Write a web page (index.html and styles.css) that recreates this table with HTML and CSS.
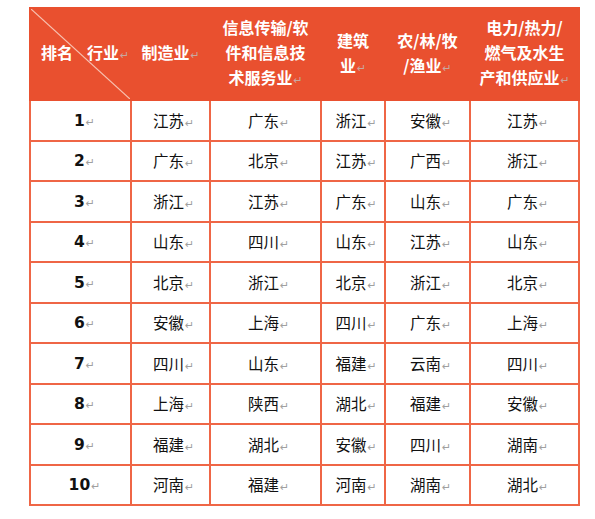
FILE: index.html
```html
<!DOCTYPE html>
<html lang="zh">
<head>
<meta charset="utf-8">
<title>行业排名</title>
<link rel="stylesheet" href="styles.css">
</head>
<body>
<table class="rank">
  <colgroup>
    <col class="c1"><col class="c2"><col class="c3"><col class="c4"><col class="c5"><col class="c6">
  </colgroup>
  <thead>
    <tr class="head">
      <th class="corner">
        <svg class="diag" viewBox="0 0 100 100" preserveAspectRatio="none"><line x1="0" y1="0" x2="100" y2="100" stroke="#f7c2b2" stroke-width="1.2" vector-effect="non-scaling-stroke"/></svg>
        <span class="corner-l">排名</span><span class="corner-r">行业<span class="pm">↵</span></span>
      </th>
      <th>制造业<span class="pm">↵</span></th>
      <th>信息传输/软<br>件和信息技<br>术服务业<span class="pm">↵</span></th>
      <th>建筑<br>业<span class="pm">↵</span></th>
      <th>农/林/牧<br>/渔业<span class="pm">↵</span></th>
      <th>电力/热力/<br>燃气及水生<br>产和供应业<span class="pm">↵</span></th>
    </tr>
  </thead>
  <tbody>
    <tr><td class="num">1<span class="pm">↵</span></td><td>江苏<span class="pm">↵</span></td><td>广东<span class="pm">↵</span></td><td>浙江<span class="pm">↵</span></td><td>安徽<span class="pm">↵</span></td><td>江苏<span class="pm">↵</span></td></tr>
    <tr><td class="num">2<span class="pm">↵</span></td><td>广东<span class="pm">↵</span></td><td>北京<span class="pm">↵</span></td><td>江苏<span class="pm">↵</span></td><td>广西<span class="pm">↵</span></td><td>浙江<span class="pm">↵</span></td></tr>
    <tr><td class="num">3<span class="pm">↵</span></td><td>浙江<span class="pm">↵</span></td><td>江苏<span class="pm">↵</span></td><td>广东<span class="pm">↵</span></td><td>山东<span class="pm">↵</span></td><td>广东<span class="pm">↵</span></td></tr>
    <tr><td class="num">4<span class="pm">↵</span></td><td>山东<span class="pm">↵</span></td><td>四川<span class="pm">↵</span></td><td>山东<span class="pm">↵</span></td><td>江苏<span class="pm">↵</span></td><td>山东<span class="pm">↵</span></td></tr>
    <tr><td class="num">5<span class="pm">↵</span></td><td>北京<span class="pm">↵</span></td><td>浙江<span class="pm">↵</span></td><td>北京<span class="pm">↵</span></td><td>浙江<span class="pm">↵</span></td><td>北京<span class="pm">↵</span></td></tr>
    <tr><td class="num">6<span class="pm">↵</span></td><td>安徽<span class="pm">↵</span></td><td>上海<span class="pm">↵</span></td><td>四川<span class="pm">↵</span></td><td>广东<span class="pm">↵</span></td><td>上海<span class="pm">↵</span></td></tr>
    <tr><td class="num">7<span class="pm">↵</span></td><td>四川<span class="pm">↵</span></td><td>山东<span class="pm">↵</span></td><td>福建<span class="pm">↵</span></td><td>云南<span class="pm">↵</span></td><td>四川<span class="pm">↵</span></td></tr>
    <tr><td class="num">8<span class="pm">↵</span></td><td>上海<span class="pm">↵</span></td><td>陕西<span class="pm">↵</span></td><td>湖北<span class="pm">↵</span></td><td>福建<span class="pm">↵</span></td><td>安徽<span class="pm">↵</span></td></tr>
    <tr><td class="num">9<span class="pm">↵</span></td><td>福建<span class="pm">↵</span></td><td>湖北<span class="pm">↵</span></td><td>安徽<span class="pm">↵</span></td><td>四川<span class="pm">↵</span></td><td>湖南<span class="pm">↵</span></td></tr>
    <tr><td class="num">10<span class="pm">↵</span></td><td>河南<span class="pm">↵</span></td><td>福建<span class="pm">↵</span></td><td>河南<span class="pm">↵</span></td><td>湖南<span class="pm">↵</span></td><td>湖北<span class="pm">↵</span></td></tr>
  </tbody>
</table>
</body>
</html>
```

FILE: styles.css
```css
html, body {
  margin: 0;
  padding: 0;
  background: #ffffff;
}
body {
  padding: 7px 0 0 29px;
  font-family: "Noto Sans CJK SC", "Noto Sans", sans-serif;
}
.rank {
  border-collapse: collapse;
  table-layout: fixed;
  width: 549px;
}
.c1 { width: 101px; }
.c2 { width: 79px; }
.c3 { width: 111px; }
.c4 { width: 64px; }
.c5 { width: 85px; }
.c6 { width: 109px; }

.head {
  height: 92px;
}
.head th {
  background: #e9502f;
  color: #ffffff;
  font-weight: 700;
  font-size: 16px;
  line-height: 25px;
  text-align: center;
  vertical-align: middle;
  padding: 0;
  border: 2px solid #e9502f;
}
.corner {
  position: relative;
  text-align: left;
  white-space: nowrap;
}
.diag {
  position: absolute;
  left: 0;
  top: 0;
  width: 100%;
  height: 100%;
  display: block;
}
.corner-l {
  position: relative;
  margin-left: 9px;
}
.corner-r {
  position: relative;
  margin-left: 14px;
}

tbody tr {
  height: 40.5px;
}
td {
  border: 2px solid #ef6646;
  padding: 3px 0 0 6px;
  text-align: center;
  vertical-align: middle;
  font-size: 15.5px;
  line-height: 20px;
  color: #111111;
  white-space: nowrap;
}
td.num {
  font-family: "DejaVu Sans", "Liberation Sans", sans-serif;
  font-weight: 700;
  font-size: 15.5px;
  padding-left: 8px;
}
.pm {
  font-family: "DejaVu Sans", sans-serif;
  font-weight: 400;
  font-size: 11px;
  color: #a0a0a0;
  margin-left: 1px;
}
.head .pm {
  color: #c8a8a0;
}
```
